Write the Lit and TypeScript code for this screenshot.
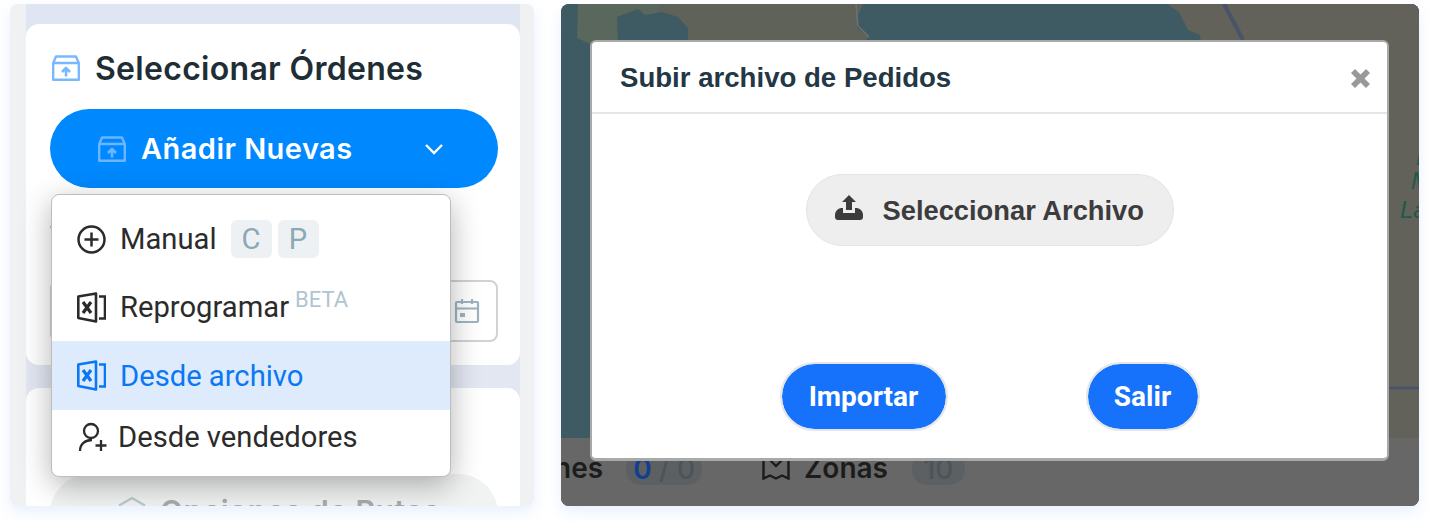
import { LitElement, html, css, svg } from "lit";
import { customElement } from "lit/decorators.js";

const boxIcon = (cls: string) => html`
  <svg class=${cls} viewBox="0 0 28 26" fill="none" stroke="currentColor" stroke-width="2.400" stroke-linejoin="round">
    <path d="M1.200 8 4 1.500H24L26.800 8V24.800H1.200Z" />
    <path d="M1.200 8H26.800" />
    <path d="M14 21.500V13.500M10 17 14 13l4 4" stroke-width="2.600" />
  </svg>
`;

const excelIcon = html`
  <svg class="row-icon" viewBox="0 0 29 31" fill="none" stroke="currentColor" stroke-width="2.600">
    <path d="M1.300 4.500 19 1.500V29.500L1.300 26Z" stroke-linejoin="round" />
    <path d="M22 4.500H28V26.500H22" />
    <path d="M6 10 14 21M14 10 6 21" stroke-width="3.200" />
  </svg>
`;

// mapa de fondo, solo lo que se ve alrededor del modal
const mapShapes = svg`
  <rect width="858" height="434" fill="#3e5a62" />
  <path d="M17 0 16 34 31 41H302V33L307 33 296 24V13L302 0Z" fill="#59675c" />
  <path d="M80 41 85 28 95 12 100 0H302L296 13V24L307 33 302 41Z" fill="#5f6259" />
  <path d="M56 13 77 5 84 11 101 8 117 13 127 24V41H57Z" fill="#3e5a62" />
  <path d="M606 0 618 8 627 26 639 31 640 41H858V0Z" fill="#62615a" />
  <path d="M295 0 297 22 308 33" stroke="#6f7274" stroke-width="1.500" fill="none" />
  <path d="M663 0 682 36" stroke="#4a5468" stroke-width="4" fill="none" />
  <rect x="828" y="41" width="30" height="393" fill="#62615a" />
  <path d="M828 384H858" stroke="#4a5468" stroke-width="3" />
  <text x="855" y="161" class="map-label">M</text>
  <text x="850" y="185" class="map-label">M</text>
  <text x="839" y="214" class="map-label">La</text>
`;

@customElement("app-root")
export class AppRoot extends LitElement {
  static styles = css`
    :host {
      display: flex;
      width: 1429px;
      height: 522px;
      box-sizing: border-box;
      padding: 4px 10px 16px;
      gap: 27px;
      background: #fff;
      font-family: Roboto, sans-serif;
      overflow: hidden;
    }

    /* panel izquierdo */
    .side {
      width: 524px;
      flex: none;
      box-sizing: border-box;
      padding: 0 14px 0 16px;
      background: #eff1f3;
      border-radius: 8px;
      box-shadow: 0 6px 14px rgba(90, 150, 255, 0.14);
      overflow: hidden;
    }
    .side-inner {
      position: relative;
      height: 100%;
      box-sizing: border-box;
      padding-top: 20px;
      display: flex;
      flex-direction: column;
      gap: 23px;
      background: linear-gradient(#dfe5f1, #e3e8f2);
    }
    .card {
      background: #fff;
      border-radius: 13px;
      padding: 26px 22px 0 24px;
    }
    .card.first {
      height: 341px;
      box-sizing: border-box;
      flex: none;
    }
    .card.second {
      flex: 1;
      padding-top: 86px;
      border-radius: 13px 13px 0 0;
    }
    .title {
      display: flex;
      align-items: center;
      gap: 15px;
      height: 36px;
      margin: 0 0 23px 2px;
      font: 600 32px Inter, sans-serif;
      letter-spacing: 0.3px;
      color: #1f2d35;
    }
    .title-icon {
      width: 28px;
      height: 26px;
      color: #79b8ff;
    }
    .add-btn {
      display: flex;
      align-items: center;
      height: 79px;
      padding: 0 54px 0 48px;
      box-sizing: border-box;
      border-radius: 40px;
      background: #0088ff;
      color: #fff;
      font: 600 29px Inter, sans-serif;
      letter-spacing: 0.45px;
    }
    .add-btn .btn-icon {
      width: 28px;
      height: 26px;
      margin-right: 15px;
      color: #6cb6ff;
    }
    .chevron {
      margin-left: auto;
      width: 20px;
      height: 12px;
    }
    .label {
      height: 92px;
      box-sizing: border-box;
      padding-top: 34px;
      font: 500 20px Roboto, sans-serif;
      color: #6a8a96;
    }
    .date-input {
      display: flex;
      align-items: center;
      justify-content: flex-end;
      height: 62px;
      box-sizing: border-box;
      padding-right: 16px;
      border: 2px solid #cfd3d5;
      border-radius: 8px;
    }
    .calendar {
      width: 26px;
      height: 26px;
      color: #9db4bf;
    }
    .routes-btn {
      display: flex;
      align-items: center;
      height: 79px;
      box-sizing: border-box;
      padding: 0 0 5px 68px;
      border-radius: 40px;
      background: #f1f2f2;
      color: #a8abad;
      font: 600 30px Inter, sans-serif;
      letter-spacing: 0.5px;
    }
    .routes-btn svg {
      width: 28px;
      height: 30px;
      margin-right: 14px;
      color: #b9c9d0;
    }

    /* menu desplegable */
    .menu {
      position: absolute;
      left: 25px;
      top: 190px;
      width: 400px;
      height: 283px;
      box-sizing: border-box;
      padding: 10px 0 0;
      background: #fff;
      border: 1px solid #bdbdbd;
      border-radius: 8px;
      box-shadow: 0 8px 30px rgba(0, 0, 0, 0.3);
      font-size: 29.200px;
      color: #2b2b2b;
    }
    .row {
      display: flex;
      align-items: center;
      height: 68px;
      padding-left: 25px;
    }
    .row.active {
      height: 69px;
      background: #deebfc;
      color: #0a78f5;
    }
    .row.last {
      height: 54px;
      padding-left: 26px;
    }
    .row-icon {
      width: 29px;
      height: 31px;
      flex: none;
      margin-right: 14px;
    }
    .row .plus {
      height: 29px;
    }
    .row.last .row-icon {
      width: 30px;
      height: 30px;
      margin-right: 10px;
    }
    .chips {
      display: flex;
      gap: 6px;
      margin-left: 14px;
    }
    .chip {
      display: flex;
      align-items: center;
      justify-content: center;
      width: 41px;
      height: 38px;
      border-radius: 6px;
      background: #eef1f3;
      color: #8aa9b5;
    }
    .beta {
      align-self: flex-start;
      margin: 14px 0 0 6px;
      font-size: 22px;
      color: #b0c5d0;
    }

    /* panel derecho con mapa */
    .stage {
      position: relative;
      flex: 1;
      display: flex;
      flex-direction: column;
      justify-content: flex-end;
      border-radius: 8px;
      overflow: hidden;
      background: #3e5a62;
      box-shadow: 0 6px 14px rgba(90, 150, 255, 0.14);
    }
    .map {
      position: absolute;
      inset: 0 0 auto 0;
      width: 858px;
      height: 434px;
    }
    .map-label {
      font: italic 24px "Liberation Sans", sans-serif;
      fill: #1f5a4a;
    }
    .tabs {
      position: relative;
      display: flex;
      align-items: flex-start;
      height: 68px;
      box-sizing: border-box;
      padding-top: 21px;
      background: #676767;
      color: #1c1c1c;
      font: 600 28px Inter, sans-serif;
    }
    .tab-name {
      line-height: 18px;
    }
    .tab-name.cut {
      margin-left: -7px;
    }
    .count {
      display: flex;
      align-items: center;
      justify-content: center;
      height: 32px;
      margin-top: -6px;
      border-radius: 15px;
      background: #5c6062;
      color: #4b5458;
      font-weight: 500;
    }
    .count.orders {
      width: 76px;
      margin: -6px 60px 0 23px;
    }
    .count.zones {
      width: 53px;
      margin-left: 24px;
    }
    .count b {
      color: #123f8f;
      font-weight: 600;
    }
    .zone-icon {
      width: 28px;
      height: 24px;
      margin: -3px 14px 0 0;
    }

    /* modal */
    .modal {
      position: absolute;
      left: 29px;
      top: 36px;
      width: 799px;
      height: 421px;
      box-sizing: border-box;
      display: flex;
      flex-direction: column;
      background: #fff;
      border: 2px solid #a9a9a9;
      border-bottom-width: 3px;
      border-radius: 6px;
    }
    .modal-head {
      display: flex;
      align-items: center;
      justify-content: space-between;
      height: 72px;
      flex: none;
      box-sizing: border-box;
      padding: 2px 16px 0 28px;
      border-bottom: 2px solid #e5e5e5;
      font: 700 27.600px "Liberation Sans", sans-serif;
      color: #233744;
    }
    .close {
      width: 21px;
      height: 21px;
      color: #999;
    }
    .modal-body {
      flex: 1;
      display: flex;
      flex-direction: column;
      align-items: center;
      padding-top: 60px;
    }
    .pick {
      display: flex;
      align-items: center;
      gap: 20px;
      width: 368px;
      height: 72px;
      box-sizing: border-box;
      padding: 2px 0 0 28px;
      border: 1px solid #e3e3e3;
      border-radius: 36px;
      background: #eeeeee;
      color: #3c3c3c;
      font: 700 27.300px "Liberation Sans", sans-serif;
    }
    .pick svg {
      width: 28px;
      height: 25px;
      margin-top: -8px;
    }
    .actions {
      display: flex;
      gap: 138px;
      margin-top: 116px;
    }
    .action {
      display: flex;
      align-items: center;
      justify-content: center;
      height: 69px;
      box-sizing: border-box;
      border: 2px solid #e6e6e6;
      border-radius: 35px;
      background: #1672fa;
      background-clip: padding-box;
      color: #fff;
      font: 700 28px Roboto, sans-serif;
    }
    .action.import {
      width: 168px;
    }
    .action.exit {
      width: 114px;
    }
  `;

  render() {
    return html`
      <section class="side">
        <div class="side-inner">
          <div class="card first">
            <div class="title">${boxIcon("title-icon")}<span>Seleccionar Órdenes</span></div>
            <div class="add-btn">
              ${boxIcon("btn-icon")}<span>Añadir Nuevas</span>
              <svg class="chevron" viewBox="0 0 20 12" fill="none" stroke="currentColor" stroke-width="2.400">
                <path d="M2 2 10 10 18 2" />
              </svg>
            </div>
            <div class="label">Ventana</div>
            <div class="date-input">
              <svg class="calendar" viewBox="0 0 26 26" fill="none" stroke="currentColor" stroke-width="2.200">
                <rect x="2" y="4" width="22" height="20" rx="1" />
                <path d="M2 10.500H24M8 1V6M18 1V6" />
                <rect x="6" y="15" width="5" height="4" fill="currentColor" stroke="none" />
              </svg>
            </div>
          </div>
          <div class="card second">
            <div class="routes-btn">
              <svg viewBox="0 0 28 30" fill="none" stroke="currentColor" stroke-width="2.200">
                <path d="M14 2 26 9V22L14 29 2 22V9Z" />
                <circle cx="14" cy="15" r="4" />
              </svg>
              <span>Opciones de Rutas</span>
            </div>
          </div>

          <div class="menu">
            <div class="row">
              <svg class="row-icon plus" viewBox="0 0 29 29" fill="none" stroke="currentColor" stroke-width="2.500">
                <circle cx="14.500" cy="14.500" r="13" />
                <path d="M14.500 7.500V21.500M7.500 14.500H21.500" />
              </svg>
              <span>Manual</span>
              <div class="chips"><span class="chip">C</span><span class="chip">P</span></div>
            </div>
            <div class="row">${excelIcon}<span>Reprogramar</span><span class="beta">BETA</span></div>
            <div class="row active">${excelIcon}<span>Desde archivo</span></div>
            <div class="row last">
              <svg class="row-icon" viewBox="0 0 30 30" fill="none" stroke="currentColor" stroke-width="2.300">
                <circle cx="13" cy="9" r="7" />
                <path d="M2 29C2 22 7 18 14 18" />
                <path d="M23 18V29M17.500 23.500H28.500" />
              </svg>
              <span>Desde vendedores</span>
            </div>
          </div>
        </div>
      </section>

      <section class="stage">
        <svg class="map" viewBox="0 0 858 434">${mapShapes}</svg>
        <div class="tabs">
          <span class="tab-name cut">nes</span>
          <span class="count orders"><b>0</b>&nbsp;/ 0</span>
          <svg class="zone-icon" viewBox="0 0 28 24" fill="none" stroke="currentColor" stroke-width="2.400">
            <path d="M1.500 1V22.500L8 19.500 14 22.500 20 19.500 26.500 22.500V1" />
            <path d="M8 4 14 10 20 4" />
          </svg>
          <span class="tab-name">Zonas</span>
          <span class="count zones">10</span>
        </div>

        <div class="modal">
          <div class="modal-head">
            <span>Subir archivo de Pedidos</span>
            <svg class="close" viewBox="0 0 21 21" fill="currentColor">
              <path d="M5 1 10.500 6.500 16 1 20 5 14.500 10.500 20 16 16 20 10.500 14.500 5 20 1 16 6.500 10.500 1 5Z" />
            </svg>
          </div>
          <div class="modal-body">
            <div class="pick">
              <svg viewBox="0 0 28 25" fill="currentColor">
                <path d="M14 0 21 7H17V15H11V7H7Z" />
                <path d="M0 19Q1 14 6 13H8V18H20V13H22Q27 14 28 19V22Q28 25 25 25H3Q0 25 0 22Z" />
              </svg>
              <span>Seleccionar Archivo</span>
            </div>
            <div class="actions">
              <div class="action import">Importar</div>
              <div class="action exit">Salir</div>
            </div>
          </div>
        </div>
      </section>
    `;
  }
}
